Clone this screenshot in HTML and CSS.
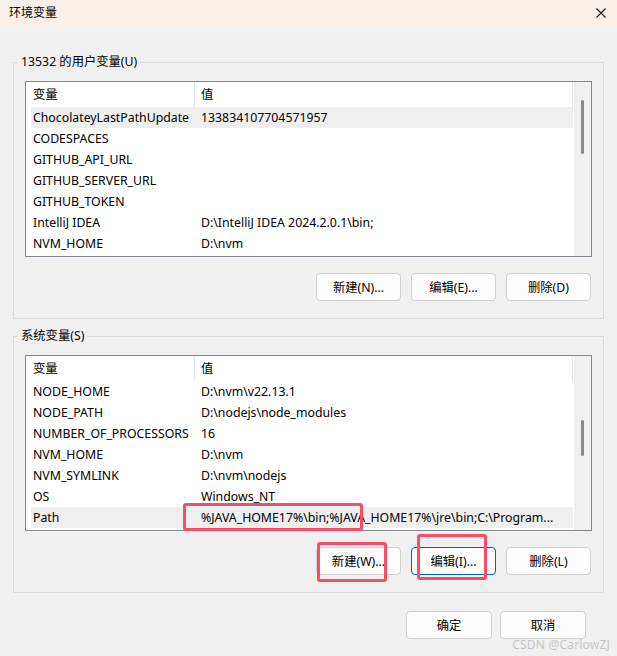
FILE: index.html
```html
<!DOCTYPE html>
<html lang="zh-CN">
<head>
<meta charset="utf-8">
<title>环境变量</title>
<link rel="stylesheet" href="styles.css">
</head>
<body>
<div class="window">
  <div class="titlebar">
    <span class="title">环境变量</span>
    <svg class="close" width="10" height="10" viewBox="0 0 10 10"><path d="M0.5 0.5 L9.5 9.5 M9.5 0.5 L0.5 9.5" stroke="#1a1a1a" stroke-width="1.1" fill="none"/></svg>
  </div>
  <div class="content">
    <div class="group">
      <span class="group-label">13532 的用户变量(U)</span>
      <div class="list">
        <div class="list-body">
          <div class="list-header">
            <div class="cell name">变量</div>
            <div class="cell value">值</div>
          </div>
          <div class="row selected"><div class="cell name">ChocolateyLastPathUpdate</div><div class="cell value">133834107704571957</div></div>
          <div class="row"><div class="cell name">CODESPACES</div><div class="cell value"></div></div>
          <div class="row"><div class="cell name">GITHUB_API_URL</div><div class="cell value"></div></div>
          <div class="row"><div class="cell name">GITHUB_SERVER_URL</div><div class="cell value"></div></div>
          <div class="row"><div class="cell name">GITHUB_TOKEN</div><div class="cell value"></div></div>
          <div class="row"><div class="cell name">IntelliJ IDEA</div><div class="cell value">D:\IntelliJ IDEA 2024.2.0.1\bin;</div></div>
          <div class="row"><div class="cell name">NVM_HOME</div><div class="cell value">D:\nvm</div></div>
        </div>
        <div class="scrollbar"><div class="thumb thumb-user"></div></div>
      </div>
      <div class="btn-row">
        <button class="btn">新建(N)...</button>
        <button class="btn">编辑(E)...</button>
        <button class="btn">删除(D)</button>
      </div>
    </div>

    <div class="group group-sys">
      <span class="group-label">系统变量(S)</span>
      <div class="list">
        <div class="list-body">
          <div class="list-header">
            <div class="cell name">变量</div>
            <div class="cell value">值</div>
          </div>
          <div class="row"><div class="cell name">NODE_HOME</div><div class="cell value">D:\nvm\v22.13.1</div></div>
          <div class="row"><div class="cell name">NODE_PATH</div><div class="cell value">D:\nodejs\node_modules</div></div>
          <div class="row"><div class="cell name">NUMBER_OF_PROCESSORS</div><div class="cell value">16</div></div>
          <div class="row"><div class="cell name">NVM_HOME</div><div class="cell value">D:\nvm</div></div>
          <div class="row"><div class="cell name">NVM_SYMLINK</div><div class="cell value">D:\nvm\nodejs</div></div>
          <div class="row"><div class="cell name">OS</div><div class="cell value">Windows_NT</div></div>
          <div class="row selected"><div class="cell name">Path</div><div class="cell value">%JAVA_HOME17%\bin;%JAVA_HOME17%\jre\bin;C:\Program...</div></div>
        </div>
        <div class="scrollbar"><div class="thumb thumb-sys"></div></div>
      </div>
      <div class="btn-row">
        <button class="btn">新建(W)...</button>
        <button class="btn focused">编辑(I)...</button>
        <button class="btn">删除(L)</button>
      </div>
    </div>

    <div class="footer">
      <button class="btn btn-footer">确定</button>
      <button class="btn btn-footer">取消</button>
    </div>
  </div>

  <div class="mark mark-path"></div>
  <div class="mark mark-new"></div>
  <div class="mark mark-edit"></div>
  <div class="watermark">CSDN @CarlowZJ</div>
</div>
</body>
</html>
```

FILE: styles.css
```css
* { box-sizing: border-box; }
html, body { margin: 0; padding: 0; }
body {
  width: 617px;
  height: 656px;
  overflow: hidden;
  background: #f0f0f0;
  font-family: "Noto Sans", "Noto Sans CJK SC", sans-serif;
  font-size: 12.3px;
  color: #000;
}
.window {
  position: relative;
  width: 617px;
  height: 656px;
  background: #f0f0f0;
}
.titlebar {
  height: 28px;
  background: #f8f0e8;
  display: flex;
  align-items: center;
  justify-content: space-between;
  padding: 0 11px 2px 9px;
}
.title { font-size: 12px; line-height: 16px; }
.close { display: block; }

.content { padding: 34px 13px 0 13px; }

.group {
  position: relative;
  border: 1px solid #dcdcdc;
  padding: 18px 11px 17px 11px;
}
.group-sys { margin-top: 17px; }
.group-label {
  position: absolute;
  top: -9px;
  left: 4px;
  padding: 0 3px;
  line-height: 16px;
  background: #f0f0f0;
  white-space: nowrap;
}

.list {
  height: 176px;
  border: 1px solid #828790;
  background: #fff;
  display: flex;
}
.list-body {
  flex: 1;
  padding: 0 1px 0 5px;
  overflow: hidden;
}
.list-header {
  display: flex;
  height: 25px;
  line-height: 25px;
  border-right: 1px solid #e8e8e8;
}
.list-header .name { border-right: 1px solid #e5e5e5; }
.row {
  display: flex;
  height: 21px;
  line-height: 21px;
}
.row.selected { background: #efefef; }
.cell { white-space: nowrap; overflow: hidden; }
.name { width: 164px; flex: none; padding-left: 2px; }
.value { flex: 1; padding-left: 6px; }

.scrollbar {
  width: 17px;
  flex: none;
  background: #f0f0f0;
  padding-left: 7px;
}
.thumb {
  width: 3px;
  border-radius: 1.5px;
  background: #8a8a8a;
}
.thumb-user { margin-top: 18px; height: 54px; }
.thumb-sys { margin-top: 64px; height: 36px; }

.btn-row {
  display: flex;
  justify-content: flex-end;
  gap: 10px;
  margin-top: 16px;
  padding-right: 1px;
}
.btn {
  width: 85px;
  height: 28px;
  border: 1px solid #d0d0d0;
  border-radius: 4px;
  background: #fdfdfd;
  font-family: inherit;
  font-size: 12.3px;
  color: #000;
  padding: 0;
}
.btn.focused { border-color: #0067c0; }

.footer {
  display: flex;
  justify-content: flex-end;
  gap: 8px;
  margin-top: 18px;
  padding-right: 18px;
}
.btn-footer { width: 86px; }

.mark {
  position: absolute;
  border: 3px solid #f44e68;
  border-radius: 3px;
}
.mark-path { left: 183px; top: 503px; width: 180px; height: 28px; }
.mark-new { left: 317px; top: 542px; width: 70px; height: 40px; }
.mark-edit { left: 417px; top: 534px; width: 70px; height: 46px; }

.watermark {
  position: absolute;
  right: 7px;
  bottom: 3px;
  font-size: 12px;
  color: #c4c4c4;
  letter-spacing: 0.2px;
  text-shadow: 0 0 1px #fff;
}
```
